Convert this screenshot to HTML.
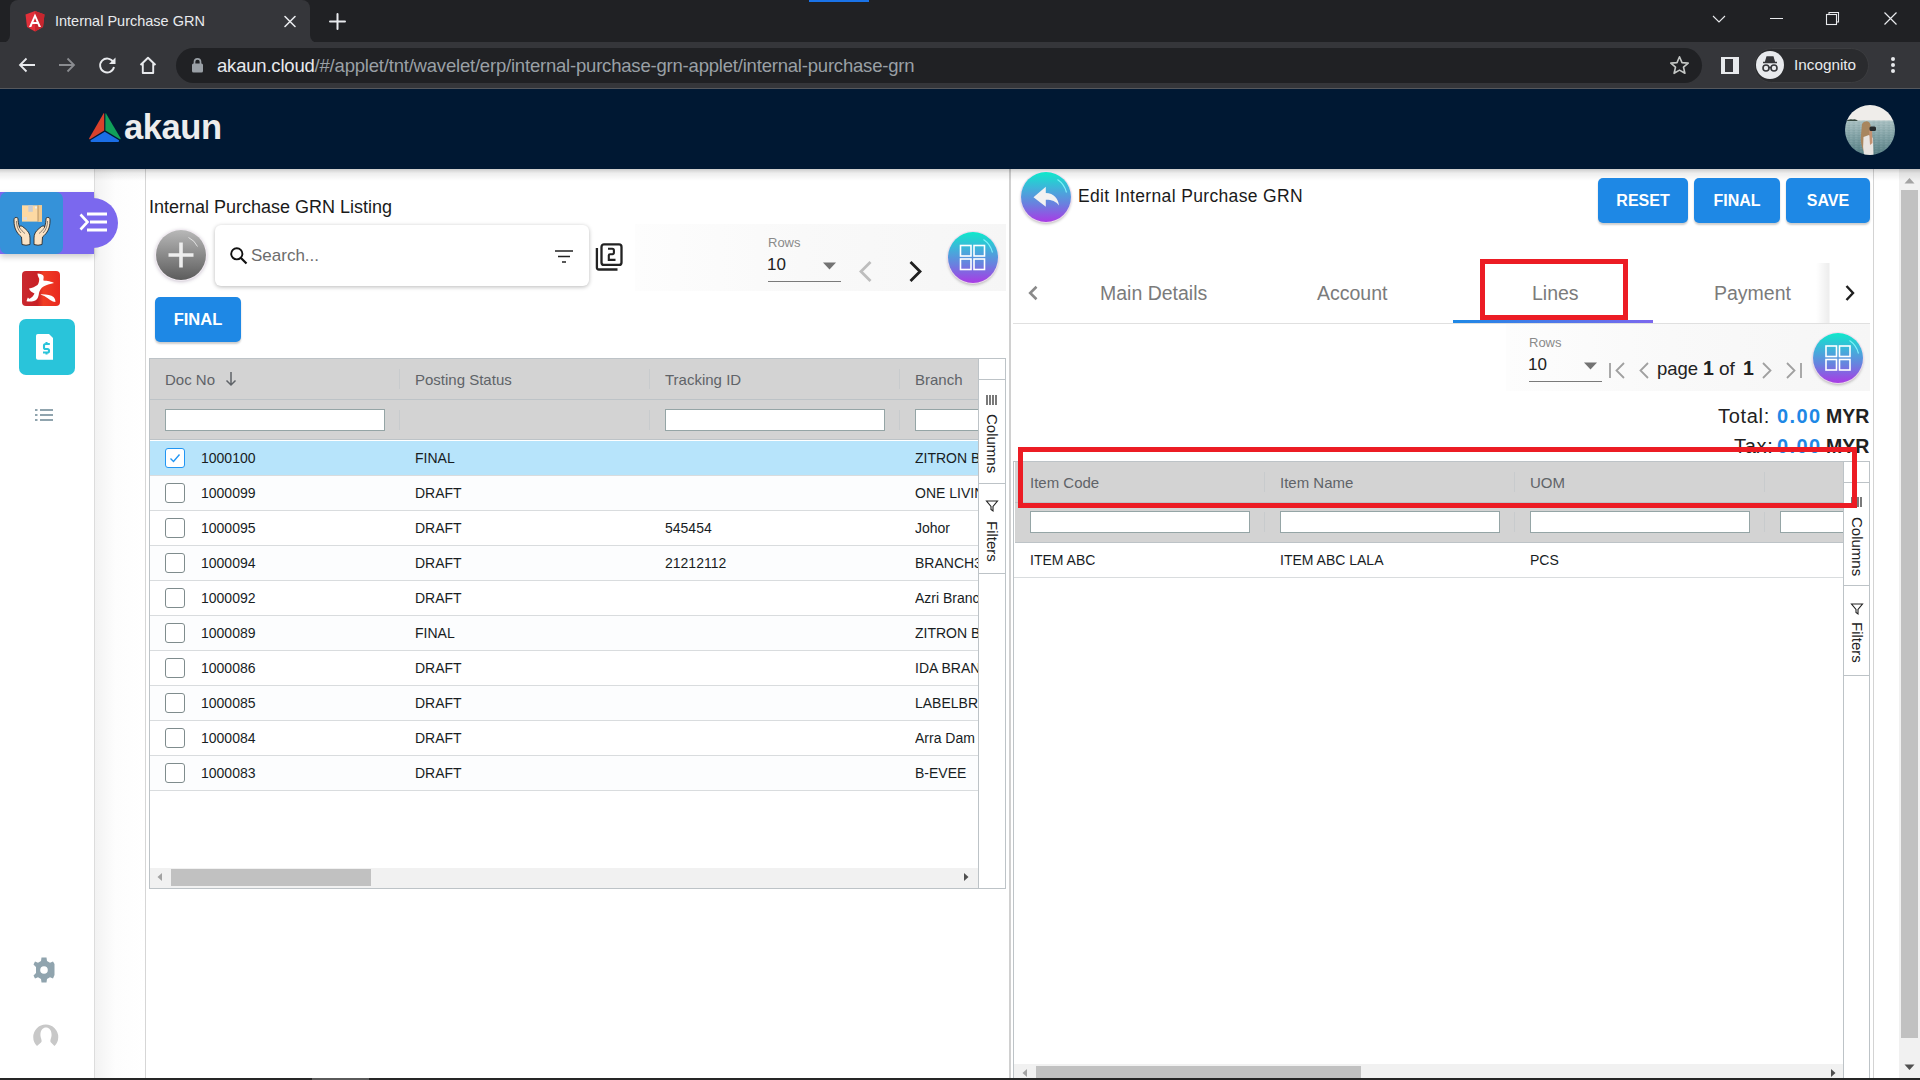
<!DOCTYPE html>
<html><head><meta charset="utf-8">
<style>
*{box-sizing:border-box;margin:0;padding:0}
html,body{width:1920px;height:1080px;overflow:hidden;background:#fff;font-family:"Liberation Sans",sans-serif}
.a{position:absolute}
#tabbar{left:0;top:0;width:1920px;height:43px;background:#202124}
#tab{left:10px;top:0px;width:300px;height:42px;background:#35363a;border-radius:8px 8px 0 0}
#toolbar{left:0;top:42px;width:1920px;height:46px;background:#35363a}
#url{left:176px;top:48px;width:1526px;height:35px;background:#202124;border-radius:18px}
#hdr{left:0;top:89px;width:1920px;height:80px;background:#001833}

.row{left:150px;width:828px;height:35px;border-bottom:1px solid #d9dcde}
.cell{height:34px;line-height:34px;font-size:14px;color:#181d1f;white-space:nowrap}
.chk{position:absolute;left:165px;width:20px;height:20px;border:1.5px solid #7f8c8d;border-radius:3px;background:#fff}
.chk.on{border-color:#2196f3}
.hdrtxt{position:absolute;font-size:15px;color:#5f6368;line-height:22px;white-space:nowrap}
.finp{position:absolute;height:22px;background:#fff;border:1px solid #95a5a6}
.csep{position:absolute;width:1px;background:rgba(189,195,199,0.5)}
.btn{position:absolute;background:#1e88e5;color:#fff;font-weight:bold;border-radius:5px;text-align:center;box-shadow:0 2px 2px rgba(0,0,0,0.2)}
.gcirc{position:absolute;border-radius:50%;background:linear-gradient(180deg,#0fe9cb 0%,#3fb3da 32%,#6a80df 64%,#a93be5 100%);box-shadow:0 0 0 1px rgba(240,220,240,0.9),0 2px 3px rgba(0,0,0,0.28)}

.tab{top:282px;font-size:19.5px;color:#7b7b7b;line-height:22px;white-space:nowrap}
</style></head><body>
<!-- browser chrome -->
<div id="tabbar" class="a"></div>
<div class="a" style="left:809px;top:0;width:60px;height:2px;background:#1a73e8"></div>
<div id="tab" class="a"></div>
<div class="a" style="left:0;top:34px;width:10px;height:9px;background:#35363a"></div>
<div class="a" style="left:0;top:26px;width:10px;height:17px;background:#202124;border-radius:0 0 8px 0"></div>
<div class="a" style="left:310px;top:34px;width:10px;height:9px;background:#35363a"></div>
<div class="a" style="left:310px;top:26px;width:10px;height:17px;background:#202124;border-radius:0 0 0 8px"></div>
<div id="toolbar" class="a"></div>
<div id="url" class="a"></div>

<div class="a" style="left:25px;top:11px;width:20px;height:21px">
<svg width="20" height="21" viewBox="0 0 20 21"><path d="M10 0 L19.5 3.4 L18 16 L10 20.5 L2 16 L0.5 3.4 Z" fill="#e2303a"/><path d="M10 0 L19.5 3.4 L18 16 L10 20.5 Z" fill="#c7262e"/><path d="M10 2.5 L4 16 H6.3 L7.5 13 H12.5 L13.7 16 H16 Z M8.4 11 L10 7 L11.6 11 Z" fill="#fff"/></svg></div>
<div class="a" style="left:55px;top:11px;font-size:14.5px;color:#e8eaed;line-height:20px;white-space:nowrap">Internal Purchase GRN</div>
<svg class="a" style="left:283px;top:15px" width="14" height="13" viewBox="0 0 14 13"><path d="M2 1.5 L12 11.5 M12 1.5 L2 11.5" stroke="#e8eaed" stroke-width="1.6" stroke-linecap="round"/></svg>
<svg class="a" style="left:329px;top:13px" width="17" height="17" viewBox="0 0 17 17"><path d="M8.5 1 V16 M1 8.5 H16" stroke="#e8eaed" stroke-width="2" stroke-linecap="round"/></svg>
<svg class="a" style="left:1711px;top:13px" width="16" height="12" viewBox="0 0 16 12"><path d="M2 3 L8 9 L14 3" stroke="#e8eaed" stroke-width="1.1" fill="none"/></svg>
<div class="a" style="left:1770px;top:18px;width:13px;height:1px;background:#e8eaed"></div>
<svg class="a" style="left:1825px;top:11px" width="15" height="15" viewBox="0 0 15 15"><rect x="1.5" x2="0" y="3.5" width="10" height="10" fill="none" stroke="#e8eaed" stroke-width="1.1"/><path d="M4 3.5 V1.5 H13.5 V11 H11.5" fill="none" stroke="#e8eaed" stroke-width="1.1"/></svg>
<svg class="a" style="left:1883px;top:11px" width="15" height="15" viewBox="0 0 15 15"><path d="M1.5 1.5 L13.5 13.5 M13.5 1.5 L1.5 13.5" stroke="#e8eaed" stroke-width="1.2"/></svg>
<svg class="a" style="left:17px;top:55px" width="20" height="20" viewBox="0 0 20 20"><path d="M18 10 H3.5 M9.5 3.5 L3 10 L9.5 16.5" stroke="#e8eaed" stroke-width="1.8" fill="none"/></svg>
<svg class="a" style="left:57px;top:55px" width="20" height="20" viewBox="0 0 20 20"><path d="M2 10 H16.5 M10.5 3.5 L17 10 L10.5 16.5" stroke="#8a8c90" stroke-width="1.8" fill="none"/></svg>
<svg class="a" style="left:98px;top:56px" width="19" height="19" viewBox="0 0 19 19"><path d="M15.2 6 A7 7 0 1 0 16 11" stroke="#e8eaed" stroke-width="1.9" fill="none"/><path d="M17.5 1.5 V8 H11 Z" fill="#e8eaed"/></svg>
<svg class="a" style="left:138px;top:56px" width="20" height="19" viewBox="0 0 20 19"><path d="M2.5 9 L10 1.8 L17.5 9 M4.8 7.5 V17 H15.2 V7.5" stroke="#e8eaed" stroke-width="1.9" fill="none" stroke-linejoin="round"/></svg>
<svg class="a" style="left:191px;top:57px" width="13" height="16" viewBox="0 0 13 16"><path d="M3.5 7 V4.8 A3 3 0 0 1 9.5 4.8 V7" stroke="#9aa0a6" stroke-width="1.7" fill="none"/><rect x="1" y="6.5" width="11" height="9" rx="1.5" fill="#9aa0a6"/></svg>
<div class="a" style="left:217px;top:55px;font-size:18.5px;letter-spacing:-0.2px;line-height:22px;color:#9aa0a6;white-space:nowrap"><span style="color:#e8eaed">akaun.cloud</span>/#/applet/tnt/wavelet/erp/internal-purchase-grn-applet/internal-purchase-grn</div>
<svg class="a" style="left:1669px;top:55px" width="21" height="20" viewBox="0 0 21 20"><path d="M10.5 1.8 L13 7.6 L19.2 8.1 L14.5 12.2 L15.9 18.3 L10.5 15.1 L5.1 18.3 L6.5 12.2 L1.8 8.1 L8 7.6 Z" stroke="#c4c7c5" stroke-width="1.6" fill="none" stroke-linejoin="round"/></svg>
<div class="a" style="left:1721px;top:57px;width:18px;height:17px;border:2px solid #e8eaed;border-left-width:4px;border-right-width:6px"></div>
<div class="a" style="left:1754px;top:48px;width:115px;height:35px;background:#2a2b2e;border-radius:18px;border:1px solid #3c3d40"></div>
<div class="a" style="left:1756px;top:51px;width:28px;height:28px;border-radius:50%;background:#e8eaed"></div>
<svg class="a" style="left:1759px;top:55px" width="22" height="20" viewBox="0 0 22 20"><path d="M4 7.5 H18 M6.5 7 L8 2 H14 L15.5 7 Z" fill="#35363a" stroke="#35363a" stroke-width="1.3"/><circle cx="7" cy="13" r="3" fill="none" stroke="#35363a" stroke-width="1.6"/><circle cx="15" cy="13" r="3" fill="none" stroke="#35363a" stroke-width="1.6"/><path d="M10 12.5 H12" stroke="#35363a" stroke-width="1.4"/></svg>
<div class="a" style="left:1794px;top:55px;font-size:15.3px;line-height:20px;color:#e8eaed;white-space:nowrap">Incognito</div>
<div class="a" style="left:1891px;top:57px;width:4px;height:4px;border-radius:50%;background:#e8eaed"></div>
<div class="a" style="left:1891px;top:63px;width:4px;height:4px;border-radius:50%;background:#e8eaed"></div>
<div class="a" style="left:1891px;top:69px;width:4px;height:4px;border-radius:50%;background:#e8eaed"></div>
<div class="a" style="left:0;top:88px;width:1920px;height:1px;background:#56585c"></div>
<div id="hdr" class="a"></div>

<!-- app header -->
<svg class="a" style="left:88px;top:112px" width="34" height="31" viewBox="0 0 34 31"><path d="M15.5 1.5 Q16 1 16.2 1.8 L16.2 18.5 L2 27.2 Q0.8 27.5 1.2 26.3 Z" fill="#d9412b"/><path d="M18 1.5 Q17.6 1 17.4 1.8 L17.4 18.5 L31.8 27.2 Q33 27.5 32.6 26.3 Z" fill="#10a05a"/><path d="M16.8 19.8 L31 28.3 Q31.5 29.9 30 30 L3.5 30 Q2 29.9 2.6 28.3 Z" fill="#1b6ee6"/></svg>
<div class="a" style="left:124px;top:107px;font-size:34.5px;font-weight:bold;color:#ededed;letter-spacing:-0.4px;line-height:40px;white-space:nowrap">akaun</div>
<svg class="a" style="left:1845px;top:105px" width="50" height="50" viewBox="0 0 50 50">
<defs><clipPath id="avc"><circle cx="25" cy="25" r="25"/></clipPath>
<linearGradient id="wat" x1="0" y1="0" x2="0" y2="1"><stop offset="0" stop-color="#a9c0c2"/><stop offset="0.5" stop-color="#7d9ea2"/><stop offset="1" stop-color="#557d82"/></linearGradient>
<pattern id="wav" width="5" height="2.5" patternUnits="userSpaceOnUse"><path d="M0 1.2 H2.5" stroke="rgba(255,255,255,0.14)" stroke-width="0.7"/><path d="M2.5 0.3 H5" stroke="rgba(40,70,75,0.14)" stroke-width="0.7"/></pattern></defs>
<g clip-path="url(#avc)">
<rect width="50" height="16" fill="#efedea"/>
<rect y="15.5" width="50" height="35" fill="url(#wat)"/>
<rect y="15.5" width="50" height="35" fill="url(#wav)"/>
<path d="M1 16 Q4 13.5 8 14.5 Q11 13.8 13 16 Z" fill="#34463e"/>
<path d="M17 19 Q19 15.5 23 16.5 Q26 18 25.5 22 L25 30 Q24 40 23 46 L18.5 46 Q15 38 16 30 Z" fill="#a8865e"/>
<path d="M18.5 32 L24 30 L28 33 L28.5 50 L19 50 Q17.5 42 18.5 32 Z" fill="#e8e4e0"/>
<path d="M24 24 L27 24 L27.5 38 L25 40 Z" fill="#c49272"/>
<rect x="24.5" y="21.5" width="6.5" height="4.5" rx="1.5" fill="#262a2c"/>
</g></svg>

<!-- sidebar -->
<div class="a" style="left:94px;top:169px;width:1px;height:911px;background:#dcdcdc"></div>
<div class="a" style="left:95px;top:169px;width:50px;height:911px;background:linear-gradient(90deg,#f2f2f2,#fdfdfd 40%,#fff)"></div>
<div class="a" style="left:145px;top:169px;width:1px;height:911px;background:#d6d6d6"></div>
<div class="a" style="left:0;top:192px;width:94px;height:62px;background:#7b68ee;box-shadow:0 3px 6px rgba(0,0,0,0.2)"></div>
<div class="a" style="left:70px;top:198px;width:48px;height:50px;border-radius:0 25px 25px 0;background:#7b68ee"></div>
<div class="a" style="left:0;top:192px;width:63px;height:62px;background:#3592d9;border-radius:7px"></div>
<svg class="a" style="left:13px;top:204px" width="38" height="43" viewBox="0 0 38 43">
 <rect x="9" y="1.3" width="20" height="16.3" fill="#fdd9a3"/>
 <rect x="25" y="1.3" width="4" height="16.3" fill="#f2c98e"/>
 <path d="M25 1.3 V17.6" stroke="#9a7a55" stroke-width="0.7"/>
 <rect x="15.3" y="1.3" width="4.5" height="6.5" fill="#c9ccd2"/>
 <rect x="22" y="2.5" width="2" height="2" fill="#eee"/>
 <rect x="10.5" y="13" width="3.5" height="3" fill="#ddd"/>
 <path d="M3 13.5 C1 13.5 1 15 1 17 C1 24 3.5 29 8.5 33 L9 40.5 Q13 42 17 40.5 L17 34 C17 30 15.5 27.5 12 24.5 L9.5 22.5 C8 21.5 6 22 6.5 23.5 C5.5 20 5 17 5 15 C5 13.5 4 13.5 3 13.5 Z" fill="#fbe2c4" stroke="#2a2a2a" stroke-width="0.9"/>
 <path d="M35 13.5 C37 13.5 37 15 37 17 C37 24 34.5 29 29.5 33 L29 40.5 Q25 42 21 40.5 L21 34 C21 30 22.5 27.5 26 24.5 L28.5 22.5 C30 21.5 32 22 31.5 23.5 C32.5 20 33 17 33 15 C33 13.5 34 13.5 35 13.5 Z" fill="#fbe2c4" stroke="#2a2a2a" stroke-width="0.9"/>
 <path d="M3.5 17 C3.5 22 5 26 8 29 M6.5 23.5 C8 26 10 28 12 29.5" stroke="#3a3a3a" stroke-width="0.6" fill="none"/>
 <path d="M34.5 17 C34.5 22 33 26 30 29 M31.5 23.5 C30 26 28 28 26 29.5" stroke="#3a3a3a" stroke-width="0.6" fill="none"/>
</svg>
<svg class="a" style="left:79px;top:212px" width="29" height="20" viewBox="0 0 29 20"><path d="M1.5 2.5 L8.5 10 L1.5 17.5" stroke="#fff" stroke-width="2.6" fill="none"/><path d="M8 2 H28 M11 10 H28 M8 18 H28" stroke="#fff" stroke-width="2.8"/></svg>
<div class="a" style="left:22px;top:271px;width:38px;height:35px;border-radius:4px;background:linear-gradient(90deg,#c9292f 0%,#c81f25 40%,#ef3d24 56%,#e9291f 100%)"></div>
<svg class="a" style="left:22px;top:271px" width="38" height="35" viewBox="0 0 38 35"><path d="M15.5 2.5 C18 2.8 21 3.5 21.5 5 C22 7 21 8.5 21.5 9.5 C25 9.8 30 10.5 32 12 C28 13 24 14 21.5 15.5 C19 17 17.5 19.5 17 22 C16.5 26 15.5 29 12 30 C9 30.8 6 30.5 4.5 30.2 C5 28.5 5.5 27 6 26.5 C6.5 27.5 7 28 8 27.5 C10 26.5 11.5 24.5 12.5 22.5 C10 21.5 7.5 19.5 7 17.5 C10 17 13.5 15.5 15.5 14 C17 12 17.3 9 17.2 7.7 C16.5 6 15.5 4.5 15.5 2.5 Z M18.5 23.4 C24 23.2 29 24 31.5 26 C33 27.5 33.5 29.5 33.4 31 C32.5 31 31.5 30.8 30.9 30.6 C27 28.5 24 26 22.3 25.1 C21 24.3 19.5 23.8 18.5 23.4 Z" fill="#fff"/></svg>
<div class="a" style="left:19px;top:319px;width:56px;height:56px;border-radius:7px;background:#29c4da"></div>
<svg class="a" style="left:36px;top:334px" width="18" height="27" viewBox="0 0 18 27"><path d="M1.8 0 H13 L17 4 V25.7 H1.8 Q0 25.7 0 24 V1.8 Q0 0 1.8 0 Z" fill="#fff"/><path d="M13.8 10 H9.6 Q8 10 8 11.6 V13.4 Q8 15 9.6 15 H11.4 Q13 15 13 16.6 V16.9 Q13 18.5 11.4 18.5 H7 M10.5 8 V10 M10.5 18.5 V20.5" stroke="#29c4da" stroke-width="2.1" fill="none"/></svg>
<svg class="a" style="left:34px;top:408px" width="20" height="14" viewBox="0 0 20 14"><path d="M1 2 H3.5 M1 7 H3.5 M1 12 H3.5 M6 2 H19 M6 7 H19 M6 12 H19" stroke="#90a4ae" stroke-width="2.2"/></svg>
<svg class="a" style="left:33px;top:957px" width="22" height="26" viewBox="0 0 22 26"><path d="M8.5 0.5 H13.5 L14 4 L17 5.8 L20 4.5 L21.5 7 V18 L20 21.5 L17 20.2 L14 22 L13.5 25.5 H8.5 L8 22 L5 20.2 L2 21.5 L0.5 18.5 L3 16 V10 L0.5 7.5 L2 4.5 L5 5.8 L8 4 Z" fill="#90a4ae"/><circle cx="11" cy="13" r="3.8" fill="#fff"/></svg>
<svg class="a" style="left:32px;top:1024px" width="28" height="24" viewBox="0 0 28 24"><path d="M5 22 A12.5 12.5 0 1 1 22.5 22 L19 18.5 C17.5 17 19 15 19.5 12 C20 6 17 3.5 14 3.5 C11 3.5 8 6 8.5 12 C9 15 10.5 17 9 18.5 Z" fill="#c8c8c8"/></svg>

<!-- left panel -->
<div class="a" style="left:149px;top:196px;font-size:18px;color:#1a1a1a;line-height:22px;white-space:nowrap">Internal Purchase GRN Listing</div>
<div class="a" style="left:156px;top:230px;width:50px;height:50px;border-radius:50%;background:linear-gradient(180deg,#b8b8b8,#5c5c5c);box-shadow:0 0 0 1px #f2ecf2,0 1px 4px rgba(40,0,60,0.35)"></div>
<svg class="a" style="left:156px;top:230px" width="50" height="50" viewBox="0 0 50 50"><path d="M25 12.5 V37.5 M12.5 25 H37.5" stroke="#eee" stroke-width="3.6"/><path d="M32.5 7.5 A19 19 0 0 1 41.5 16.5" stroke="rgba(255,255,255,0.75)" stroke-width="0.9" fill="none"/></svg>
<div class="a" style="left:215px;top:225px;width:374px;height:61px;background:#fff;border-radius:6px;box-shadow:0 1px 4px rgba(0,0,0,0.28)"></div>
<svg class="a" style="left:229px;top:246px" width="20" height="20" viewBox="0 0 20 20"><circle cx="7.8" cy="7.8" r="5.6" stroke="#111" stroke-width="1.9" fill="none"/><path d="M12 12 L17.5 17.5" stroke="#111" stroke-width="2.2"/></svg>
<div class="a" style="left:251px;top:245px;font-size:17px;color:#6d6d6d;line-height:22px;white-space:nowrap">Search...</div>
<svg class="a" style="left:554px;top:249px" width="20" height="15" viewBox="0 0 20 15"><path d="M1 2 H19 M4 7.5 H16 M8 13 H12" stroke="#222" stroke-width="1.6"/></svg>
<svg class="a" style="left:594px;top:242px" width="30" height="31" viewBox="0 0 30 31"><rect x="7.5" y="2.4" width="20" height="20.5" rx="2.5" stroke="#222" stroke-width="2.3" fill="none"/><path d="M2.9 6 V25.5 Q2.9 27.5 5 27.5 H23.5" stroke="#222" stroke-width="2.3" fill="none"/><path d="M14 6.8 H18.3 Q19.9 6.8 19.9 8.4 V10.6 Q19.9 12.2 18.3 12.2 H16 Q14.8 12.2 14.8 13.4 V17.9 H21.5" stroke="#222" stroke-width="2.1" fill="none"/></svg>
<div class="a" style="left:635px;top:224px;width:371px;height:67px;background:linear-gradient(90deg,#fdfdfd 0%,#f9f9f9 45%,#f6f6f6 100%)"></div>
<div class="a" style="left:768px;top:235px;font-size:13px;color:#8a8a8a;line-height:16px">Rows</div>
<div class="a" style="left:767px;top:255px;font-size:17px;color:#222;line-height:20px">10</div>
<div class="a" style="left:768px;top:281px;width:73px;height:1px;background:#7a7a7a"></div>
<svg class="a" style="left:822px;top:262px" width="15" height="8" viewBox="0 0 15 8"><path d="M1 0.5 H14 L7.5 7.5 Z" fill="#737373"/></svg>
<svg class="a" style="left:856px;top:259px" width="18" height="25" viewBox="0 0 18 25"><path d="M14.5 3 L5 12.5 L14.5 22" stroke="#bdbdbd" stroke-width="2.8" fill="none"/></svg>
<svg class="a" style="left:907px;top:259px" width="18" height="25" viewBox="0 0 18 25"><path d="M3.5 3 L13 12.5 L3.5 22" stroke="#1f1f1f" stroke-width="2.8" fill="none"/></svg>
<div class="gcirc" style="left:948px;top:232px;width:50px;height:51px"></div>
<svg class="a" style="left:947px;top:232px" width="51" height="51" viewBox="0 0 51 51"><g stroke="#fff" stroke-width="1.6" fill="none"><rect x="13.5" y="13.5" width="10.5" height="10.5"/><rect x="27" y="13.5" width="10.5" height="10.5"/><rect x="13.5" y="27" width="10.5" height="10.5"/><rect x="27" y="27" width="10.5" height="10.5"/></g><path d="M36.5 7.5 A22 22 0 0 1 45.5 20.5" stroke="rgba(140,250,255,0.85)" stroke-width="1.1" fill="none"/></svg>
<div class="btn" style="left:155px;top:297px;width:86px;height:45px;line-height:45px;font-size:16.5px">FINAL</div>

<!-- left grid -->
<div class="a" style="left:149px;top:358px;width:857px;height:531px;border:1px solid #bdc3c7;background:#fff"></div>
<div class="a" style="left:150px;top:359px;width:828px;height:81px;background:#d3d3d3;border-bottom:1px solid #bdc3c7"></div>
<div class="a" style="left:150px;top:399px;width:828px;height:1px;background:#bdc3c7"></div>
<div class="hdrtxt" style="left:165px;top:369px">Doc No</div>
<svg class="a" style="left:225px;top:371px" width="12" height="16" viewBox="0 0 12 16"><path d="M6 1 V14 M1.5 9.5 L6 14 L10.5 9.5" stroke="#5f6368" stroke-width="1.5" fill="none"/></svg>
<div class="hdrtxt" style="left:415px;top:369px">Posting Status</div>
<div class="hdrtxt" style="left:665px;top:369px">Tracking ID</div>
<div class="hdrtxt" style="left:915px;top:369px">Branch</div>
<div class="csep" style="left:399px;top:369px;height:20px"></div>
<div class="csep" style="left:649px;top:369px;height:20px"></div>
<div class="csep" style="left:899px;top:369px;height:20px"></div>
<div class="csep" style="left:399px;top:410px;height:20px"></div>
<div class="csep" style="left:649px;top:410px;height:20px"></div>
<div class="csep" style="left:899px;top:410px;height:20px"></div>
<div class="finp" style="left:165px;top:409px;width:220px"></div>
<div class="finp" style="left:665px;top:409px;width:220px"></div>
<div class="finp" style="left:915px;top:409px;width:63px;border-right:none"></div>
<div class="a row" style="top:441px;background:#b7e4fb"></div><div class="chk on" style="top:448px"><svg width="14" height="14" viewBox="0 0 14 14" style="position:absolute;left:2px;top:2px"><path d="M2.5 7.5 L5.5 10.5 L11.5 3.5" stroke="#2196f3" stroke-width="1.4" fill="none"/></svg></div><div class="a cell" style="left:201px;top:441px">1000100</div><div class="a cell" style="left:415px;top:441px">FINAL</div><div class="a cell" style="left:915px;top:441px;width:63px;overflow:hidden">ZITRON B</div><div class="a row" style="top:476px;background:#fcfdfe"></div><div class="chk" style="top:483px"></div><div class="a cell" style="left:201px;top:476px">1000099</div><div class="a cell" style="left:415px;top:476px">DRAFT</div><div class="a cell" style="left:915px;top:476px;width:63px;overflow:hidden">ONE LIVIN</div><div class="a row" style="top:511px;background:#fff"></div><div class="chk" style="top:518px"></div><div class="a cell" style="left:201px;top:511px">1000095</div><div class="a cell" style="left:415px;top:511px">DRAFT</div><div class="a cell" style="left:665px;top:511px">545454</div><div class="a cell" style="left:915px;top:511px;width:63px;overflow:hidden">Johor</div><div class="a row" style="top:546px;background:#fcfdfe"></div><div class="chk" style="top:553px"></div><div class="a cell" style="left:201px;top:546px">1000094</div><div class="a cell" style="left:415px;top:546px">DRAFT</div><div class="a cell" style="left:665px;top:546px">21212112</div><div class="a cell" style="left:915px;top:546px;width:63px;overflow:hidden">BRANCH3</div><div class="a row" style="top:581px;background:#fff"></div><div class="chk" style="top:588px"></div><div class="a cell" style="left:201px;top:581px">1000092</div><div class="a cell" style="left:415px;top:581px">DRAFT</div><div class="a cell" style="left:915px;top:581px;width:63px;overflow:hidden">Azri Branc</div><div class="a row" style="top:616px;background:#fcfdfe"></div><div class="chk" style="top:623px"></div><div class="a cell" style="left:201px;top:616px">1000089</div><div class="a cell" style="left:415px;top:616px">FINAL</div><div class="a cell" style="left:915px;top:616px;width:63px;overflow:hidden">ZITRON B</div><div class="a row" style="top:651px;background:#fff"></div><div class="chk" style="top:658px"></div><div class="a cell" style="left:201px;top:651px">1000086</div><div class="a cell" style="left:415px;top:651px">DRAFT</div><div class="a cell" style="left:915px;top:651px;width:63px;overflow:hidden">IDA BRAN</div><div class="a row" style="top:686px;background:#fcfdfe"></div><div class="chk" style="top:693px"></div><div class="a cell" style="left:201px;top:686px">1000085</div><div class="a cell" style="left:415px;top:686px">DRAFT</div><div class="a cell" style="left:915px;top:686px;width:63px;overflow:hidden">LABELBRA</div><div class="a row" style="top:721px;background:#fff"></div><div class="chk" style="top:728px"></div><div class="a cell" style="left:201px;top:721px">1000084</div><div class="a cell" style="left:415px;top:721px">DRAFT</div><div class="a cell" style="left:915px;top:721px;width:63px;overflow:hidden">Arra Dam</div><div class="a row" style="top:756px;background:#fcfdfe"></div><div class="chk" style="top:763px"></div><div class="a cell" style="left:201px;top:756px">1000083</div><div class="a cell" style="left:415px;top:756px">DRAFT</div><div class="a cell" style="left:915px;top:756px;width:63px;overflow:hidden">B-EVEE</div>
<div class="a" style="left:150px;top:868px;width:828px;height:20px;background:#f1f1f1"></div>
<div class="a" style="left:171px;top:869px;width:200px;height:17px;background:#c1c1c1"></div>
<svg class="a" style="left:156px;top:872px" width="8" height="10" viewBox="0 0 8 10"><path d="M6 1 L1.5 5 L6 9 Z" fill="#a3a3a3"/></svg>
<svg class="a" style="left:962px;top:872px" width="8" height="10" viewBox="0 0 8 10"><path d="M2 1 L6.5 5 L2 9 Z" fill="#505050"/></svg>
<div class="a" style="left:978px;top:358px;width:1px;height:531px;background:#bdc3c7"></div>
<div class="a" style="left:979px;top:379px;width:27px;height:1px;background:#bdc3c7"></div>
<div class="a" style="left:979px;top:483px;width:27px;height:1px;background:#bdc3c7"></div>
<div class="a" style="left:979px;top:573px;width:27px;height:1px;background:#bdc3c7"></div>
<svg class="a" style="left:985px;top:394px" width="14" height="12" viewBox="0 0 14 12"><path d="M2 1 V11 M5 1 V11 M8 1 V11 M11 1 V11" stroke="#222" stroke-width="1.2"/></svg>
<div class="a" style="left:982px;top:414px;width:20px;height:64px"><div style="position:absolute;left:-22px;top:22px;width:64px;height:20px;transform:rotate(90deg);font-size:15px;line-height:20px;color:#222;text-align:left">Columns</div></div>
<svg class="a" style="left:985px;top:499px" width="14" height="14" viewBox="0 0 14 14"><path d="M1.5 2 H12.5 L8 7.5 V12 L6 10.5 V7.5 Z" stroke="#222" stroke-width="1.1" fill="none"/></svg>
<div class="a" style="left:982px;top:521px;width:20px;height:46px"><div style="position:absolute;left:-13px;top:13px;width:46px;height:20px;transform:rotate(90deg);font-size:15px;line-height:20px;color:#222;text-align:left">Filters</div></div>
<div class="a" style="left:1009px;top:169px;width:2px;height:911px;background:#d0d0d0"></div>

<!-- right panel -->
<div class="a" style="left:1873px;top:169px;width:1px;height:911px;background:#d3d3d3"></div>
<div class="a" style="left:1899px;top:169px;width:21px;height:909px;background:#f1f1f1"></div>
<div class="a" style="left:1901px;top:190px;width:17px;height:848px;background:#c1c1c1"></div>
<svg class="a" style="left:1904px;top:177px" width="11" height="7" viewBox="0 0 11 7"><path d="M0.5 6.5 L5.5 1 L10.5 6.5 Z" fill="#a3a3a3"/></svg>
<svg class="a" style="left:1904px;top:1064px" width="11" height="7" viewBox="0 0 11 7"><path d="M0.5 0.5 L5.5 6 L10.5 0.5 Z" fill="#505050"/></svg>
<div class="a" style="left:0;top:169px;width:1920px;height:12px;background:linear-gradient(rgba(0,0,0,0.2),rgba(0,0,0,0.07) 35%,rgba(0,0,0,0))"></div>
<div class="gcirc" style="left:1021px;top:172px;width:50px;height:50px"></div>
<svg class="a" style="left:1021px;top:172px" width="50" height="50" viewBox="0 0 50 50"><path d="M36.5 7.5 A22 22 0 0 1 45.5 20.5" stroke="rgba(140,250,255,0.85)" stroke-width="1.1" fill="none"/><path d="M12.5 25.2 L24.8 14.8 V21 C33 21.5 37 26 38 33.5 C35 29.5 31 27.8 24.8 27.8 V34.8 Z" fill="#f2f2f2"/></svg>
<div class="a" style="left:1078px;top:185px;font-size:17.5px;letter-spacing:0.35px;color:#1a1a1a;line-height:22px;white-space:nowrap">Edit Internal Purchase GRN</div>
<div class="btn" style="left:1598px;top:178px;width:90px;height:45px;line-height:45px;font-size:16px">RESET</div>
<div class="btn" style="left:1694px;top:178px;width:86px;height:45px;line-height:45px;font-size:16px">FINAL</div>
<div class="btn" style="left:1786px;top:178px;width:84px;height:45px;line-height:45px;font-size:16px">SAVE</div>

<!-- tabs -->
<svg class="a" style="left:1026px;top:284px" width="14" height="18" viewBox="0 0 14 18"><path d="M10.5 2.8 L4.2 9 L10.5 15.2" stroke="#8a8a8a" stroke-width="2.6" fill="none"/></svg>
<div class="a tab" style="left:1100px">Main Details</div>
<div class="a tab" style="left:1317px">Account</div>
<div class="a tab" style="left:1532px">Lines</div>
<div class="a tab" style="left:1714px">Payment</div>
<div class="a" style="left:1013px;top:323px;width:857px;height:1px;background:#e0e0e0"></div>
<div class="a" style="left:1453px;top:320px;width:200px;height:3px;background:linear-gradient(90deg,#1e88e5,#7b68ee)"></div>
<div class="a" style="left:1816px;top:263px;width:54px;height:60px;background:linear-gradient(90deg,rgba(0,0,0,0) 0,rgba(0,0,0,0.07) 13px,#fff 14px,#fff)"></div>
<svg class="a" style="left:1843px;top:284px" width="14" height="18" viewBox="0 0 14 18"><path d="M3.5 2 L10 9 L3.5 16" stroke="#1f1f1f" stroke-width="2.4" fill="none"/></svg>

<!-- right pagination -->
<div class="a" style="left:1506px;top:324px;width:364px;height:67px;background:linear-gradient(90deg,#fdfdfd 0%,#f9f9f9 45%,#f6f6f6 100%)"></div>
<div class="a" style="left:1529px;top:335px;font-size:13px;color:#8a8a8a;line-height:16px">Rows</div>
<div class="a" style="left:1528px;top:355px;font-size:17px;color:#222;line-height:20px">10</div>
<div class="a" style="left:1529px;top:381px;width:73px;height:1px;background:#7a7a7a"></div>
<svg class="a" style="left:1583px;top:362px" width="15" height="8" viewBox="0 0 15 8"><path d="M1 0.5 H14 L7.5 7.5 Z" fill="#737373"/></svg>
<svg class="a" style="left:1607px;top:360px" width="20" height="20" viewBox="0 0 20 20"><path d="M3 3 V18" stroke="#a0a0a0" stroke-width="1.8"/><path d="M17 3 L9.5 10.5 L17 18" stroke="#a0a0a0" stroke-width="1.8" fill="none"/></svg>
<svg class="a" style="left:1637px;top:360px" width="14" height="20" viewBox="0 0 14 20"><path d="M11 3 L3.5 10.5 L11 18" stroke="#a0a0a0" stroke-width="1.8" fill="none"/></svg>
<div class="a" style="left:1657px;top:358px;font-size:18.5px;color:#222;line-height:22px;white-space:nowrap">page</div>
<div class="a" style="left:1703px;top:357px;font-size:19.5px;font-weight:bold;color:#222;line-height:22px">1</div>
<div class="a" style="left:1719px;top:358px;font-size:19px;color:#222;line-height:22px">of</div>
<div class="a" style="left:1743px;top:357px;font-size:19.5px;font-weight:bold;color:#222;line-height:22px">1</div>
<svg class="a" style="left:1760px;top:360px" width="14" height="20" viewBox="0 0 14 20"><path d="M3 3 L10.5 10.5 L3 18" stroke="#a0a0a0" stroke-width="1.8" fill="none"/></svg>
<svg class="a" style="left:1784px;top:360px" width="20" height="20" viewBox="0 0 20 20"><path d="M17 3 V18" stroke="#a0a0a0" stroke-width="1.8"/><path d="M3 3 L10.5 10.5 L3 18" stroke="#a0a0a0" stroke-width="1.8" fill="none"/></svg>
<div class="gcirc" style="left:1813px;top:333px;width:50px;height:50px"></div>
<svg class="a" style="left:1813px;top:333px" width="50" height="50" viewBox="0 0 50 50"><g stroke="#fff" stroke-width="1.6" fill="none"><rect x="13" y="13" width="10.5" height="10.5"/><rect x="26.5" y="13" width="10.5" height="10.5"/><rect x="13" y="26.5" width="10.5" height="10.5"/><rect x="26.5" y="26.5" width="10.5" height="10.5"/></g><path d="M36.5 7.5 A22 22 0 0 1 45.5 20.5" stroke="rgba(140,250,255,0.85)" stroke-width="1.1" fill="none"/></svg>

<!-- totals -->
<div class="a" style="left:1718px;top:403px;font-size:20px;letter-spacing:0.7px;line-height:26px;color:#222;white-space:nowrap">Total:</div>
<div class="a" style="left:1777px;top:403px;font-size:20px;font-weight:bold;letter-spacing:1.4px;line-height:26px;color:#1e88e5;white-space:nowrap">0.00</div>
<div class="a" style="left:1826px;top:403px;font-size:19.5px;font-weight:bold;line-height:26px;color:#222;white-space:nowrap">MYR</div>
<div class="a" style="left:1734px;top:433px;font-size:20px;letter-spacing:0.7px;line-height:26px;color:#222;white-space:nowrap">Tax:</div>
<div class="a" style="left:1777px;top:433px;font-size:20px;font-weight:bold;letter-spacing:1.4px;line-height:26px;color:#1e88e5;white-space:nowrap">0.00</div>
<div class="a" style="left:1826px;top:433px;font-size:19.5px;font-weight:bold;line-height:26px;color:#222;white-space:nowrap">MYR</div>

<!-- right grid -->
<div class="a" style="left:1013px;top:461px;width:857px;height:617px;border:1px solid #bdc3c7;border-bottom:none;background:#fff"></div>
<div class="a" style="left:1015px;top:462px;width:828px;height:81px;background:#d3d3d3;border-bottom:1px solid #bdc3c7"></div>
<div class="a" style="left:1015px;top:502px;width:828px;height:1px;background:#bdc3c7"></div>
<div class="hdrtxt" style="left:1030px;top:472px">Item Code</div>
<div class="hdrtxt" style="left:1280px;top:472px">Item Name</div>
<div class="hdrtxt" style="left:1530px;top:472px">UOM</div>
<div class="csep" style="left:1264px;top:472px;height:20px"></div>
<div class="csep" style="left:1514px;top:472px;height:20px"></div>
<div class="csep" style="left:1764px;top:472px;height:20px"></div>
<div class="csep" style="left:1264px;top:512px;height:20px"></div>
<div class="csep" style="left:1514px;top:512px;height:20px"></div>
<div class="csep" style="left:1764px;top:512px;height:20px"></div>
<div class="finp" style="left:1030px;top:511px;width:220px"></div>
<div class="finp" style="left:1280px;top:511px;width:220px"></div>
<div class="finp" style="left:1530px;top:511px;width:220px"></div>
<div class="finp" style="left:1780px;top:511px;width:63px;border-right:none"></div>
<div class="a" style="left:1014px;top:543px;width:829px;height:35px;background:#fff;border-bottom:1px solid #d9dcde"></div>
<div class="a cell" style="left:1030px;top:543px">ITEM ABC</div>
<div class="a cell" style="left:1280px;top:543px">ITEM ABC LALA</div>
<div class="a cell" style="left:1530px;top:543px">PCS</div>
<div class="a" style="left:1014px;top:1064px;width:829px;height:14px;background:#f1f1f1"></div>
<div class="a" style="left:1036px;top:1066px;width:325px;height:12px;background:#c1c1c1"></div>
<svg class="a" style="left:1021px;top:1068px" width="8" height="10" viewBox="0 0 8 10"><path d="M6 1 L1.5 5 L6 9 Z" fill="#a3a3a3"/></svg>
<svg class="a" style="left:1829px;top:1068px" width="8" height="10" viewBox="0 0 8 10"><path d="M2 1 L6.5 5 L2 9 Z" fill="#505050"/></svg>
<div class="a" style="left:1843px;top:461px;width:1px;height:617px;background:#bdc3c7"></div>
<div class="a" style="left:1844px;top:482px;width:26px;height:1px;background:#bdc3c7"></div>
<div class="a" style="left:1844px;top:585px;width:26px;height:1px;background:#bdc3c7"></div>
<div class="a" style="left:1844px;top:675px;width:26px;height:1px;background:#bdc3c7"></div>
<svg class="a" style="left:1850px;top:496px" width="14" height="12" viewBox="0 0 14 12"><path d="M2 1 V11 M5 1 V11 M8 1 V11 M11 1 V11" stroke="#222" stroke-width="1.2"/></svg>
<div class="a" style="left:1847px;top:517px;width:20px;height:64px"><div style="position:absolute;left:-22px;top:22px;width:64px;height:20px;transform:rotate(90deg);font-size:15px;line-height:20px;color:#222;text-align:left">Columns</div></div>
<svg class="a" style="left:1850px;top:602px" width="14" height="14" viewBox="0 0 14 14"><path d="M1.5 2 H12.5 L8 7.5 V12 L6 10.5 V7.5 Z" stroke="#222" stroke-width="1.1" fill="none"/></svg>
<div class="a" style="left:1847px;top:622px;width:20px;height:46px"><div style="position:absolute;left:-13px;top:13px;width:46px;height:20px;transform:rotate(90deg);font-size:15px;line-height:20px;color:#222;text-align:left">Filters</div></div>

<!-- annotations -->
<div class="a" style="left:1480px;top:259px;width:148px;height:61px;border:5px solid #ec1c24"></div>
<div class="a" style="left:1018px;top:447px;width:839px;height:61px;border:5px solid #ec1c24"></div>
<div class="a" style="left:0;top:1078px;width:1920px;height:2px;background:#262626"></div>
<div class="a" style="left:312px;top:1078px;width:57px;height:2px;background:#5a5a5a"></div>
</body></html>
